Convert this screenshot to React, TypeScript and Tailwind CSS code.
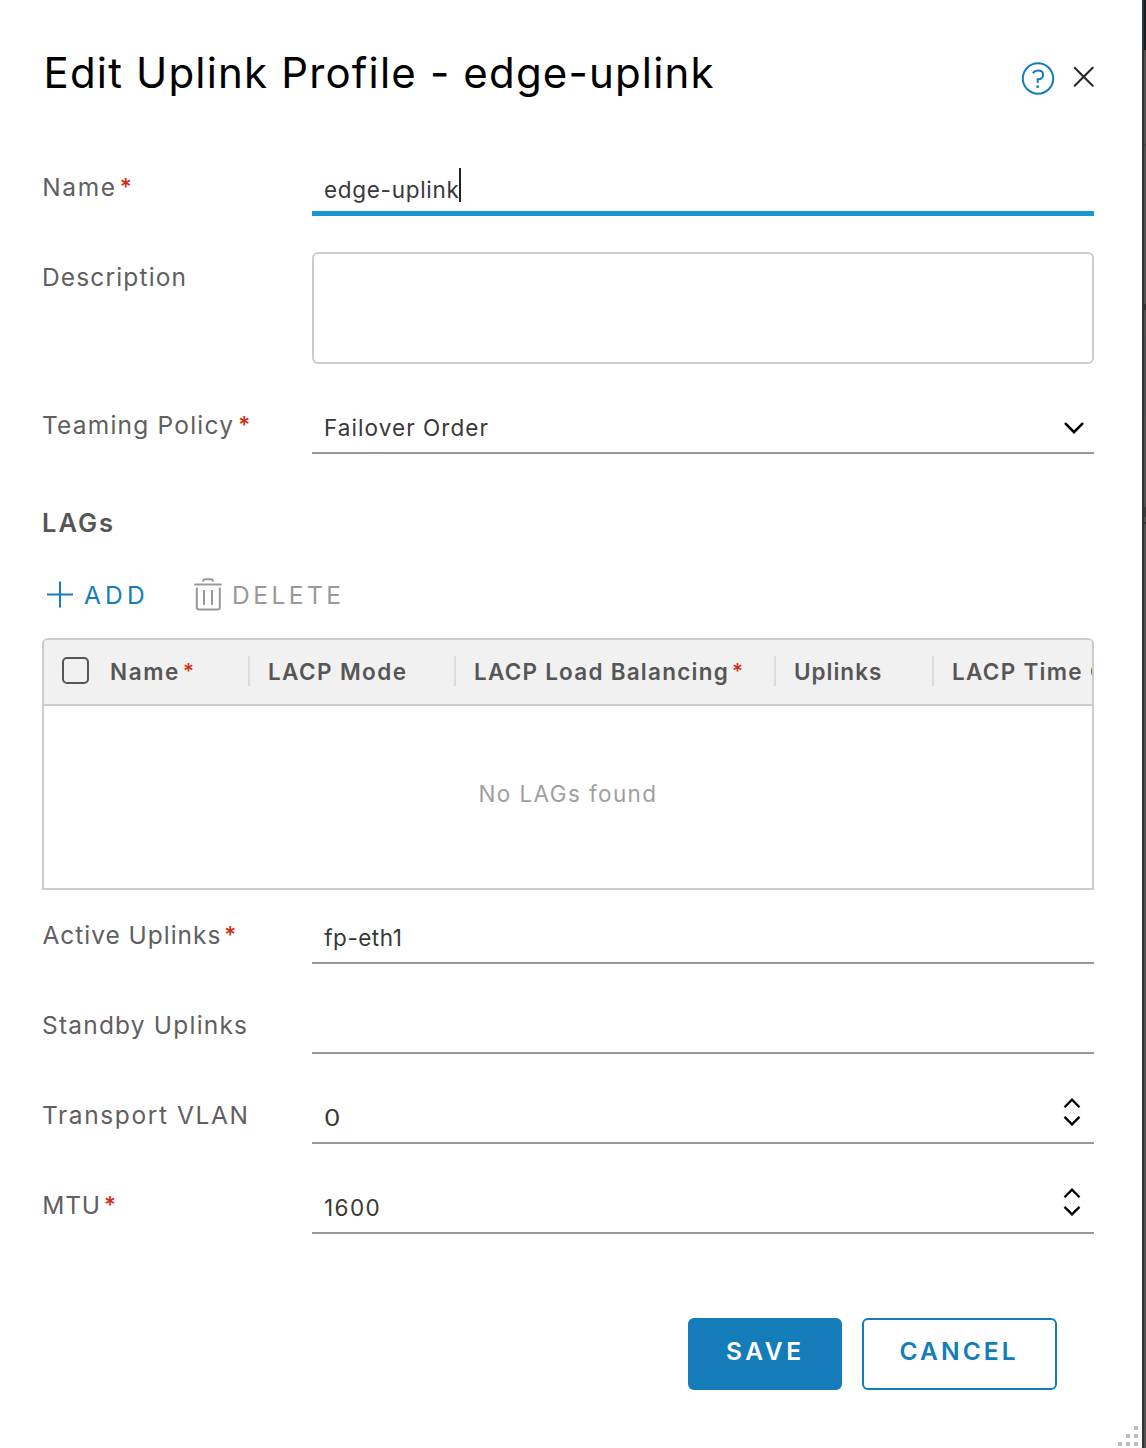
import type { ReactNode } from "react";

function Star({ className = "" }: { className?: string }) {
  return (
    <span className={`inline-block leading-9 font-medium tracking-normal text-[#cf2a10] ${className}`}>
      *
    </span>
  );
}

function Row({
  label,
  labelClass,
  star,
  tall,
  last,
  children,
}: {
  label: string;
  labelClass: string;
  star?: string;
  tall?: boolean;
  last?: boolean;
  children: ReactNode;
}) {
  return (
    <div className={`flex ${tall ? "h-[112px]" : "h-[54px]"} ${last ? "" : "mb-9"}`}>
      <div className="flex w-[270px] shrink-0 pt-[7px] text-[24.5px] leading-9 font-normal whitespace-nowrap text-[#606060]">
        <span className={labelClass}>{label}</span>
        {star && <Star className={`text-[23px] ${star}`} />}
      </div>
      {children}
    </div>
  );
}

function Field({ children, focus }: { children?: ReactNode; focus?: boolean }) {
  return (
    <div
      className={`flex flex-1 items-start justify-between pt-[10px] pr-[10px] pl-3 text-[22.5px] leading-9 font-normal text-[#383838] ${
        focus ? "border-b-5 border-[#1a94d2]" : "border-b-2 border-[#999]"
      }`}
    >
      {children}
    </div>
  );
}

function Stepper() {
  return (
    <svg className="mr-[2px] -mt-[3px] h-[30px] w-5" viewBox="0 0 20 30" fill="none" stroke="#000" strokeWidth="2.3">
      <path d="M2.5 10.2 10 2.7 17.5 10.2M2.5 19.9 10 27.4 17.5 19.9" />
    </svg>
  );
}

function Divider() {
  return <span className="h-[30px] w-[2px] shrink-0 bg-[#dcdcdc]" />;
}

export default function App() {
  return (
    <div className="flex h-[1448px] w-[1146px] overflow-hidden bg-white font-['Inter',sans-serif]">
      <main className="relative flex w-[1142px] shrink-0 flex-col pr-[48px] pl-[42px]">
        <header className="flex h-[162px] items-start pt-[45px]">
          <h1 className="ml-[1.5px] flex-1 text-[42px] leading-[56px] font-normal tracking-[1.17px] whitespace-nowrap text-black">
            Edit Uplink Profile - edge-uplink
          </h1>
          <svg className="mt-4 h-[34px] w-[34px]" viewBox="0 0 34 34" fill="none" stroke="#137cb9" strokeWidth="2">
            <circle cx="17" cy="17.5" r="15.2" />
            <path d="M11.8 12c1.4-1.7 3-2.6 5.2-2.6 3.1 0 5.1 1.7 5.1 4.3 0 3-2.4 4.5-5.4 4.6v3.6" />
            <circle cx="16.7" cy="25.7" r="1.4" fill="#137cb9" stroke="none" />
          </svg>
          <svg className="mt-[21px] ml-[18px] h-[21px] w-[21px]" viewBox="0 0 21 21" fill="none" stroke="#262626" strokeWidth="2" strokeLinecap="round">
            <path d="m1.7 1.7 18 18M19.7 1.7l-18 18" />
          </svg>
        </header>

        <Row label="Name" labelClass="ml-[0.3px] tracking-[1.6px]" star="ml-[3px]">
          <Field focus>
            <span className="flex">
              <span className="tracking-[0.7px]">edge-uplink</span>
              <span className="-mt-1 h-[34px] w-[2px] bg-[#222]" />
            </span>
          </Field>
        </Row>
        <Row label="Description" labelClass="tracking-[1.15px]" tall>
          <div className="flex-1 rounded-[6px] border-2 border-[#ccc]" />
        </Row>
        <Row label="Teaming Policy" labelClass="tracking-[1.2px]" star="ml-[4px]">
          <Field>
            <span className="tracking-[1.07px]">Failover Order</span>
            <svg className="mt-[10px] h-4 w-5" viewBox="0 0 20 16" fill="none" stroke="#000" strokeWidth="2.6" strokeLinecap="round">
              <path d="m1.8 3.8 8.2 8.4 8.2-8.4" />
            </svg>
          </Field>
        </Row>

        <h2 className="mt-[15px] text-[25.5px] leading-9 font-semibold tracking-[2px] text-[#565656]">LAGs</h2>
        <div className="mt-9 flex h-[61px] items-start text-[24.5px] leading-9 font-normal">
          <div className="flex w-[151px] text-[#137cb9]">
            <svg className="mt-1 ml-1 h-7 w-7" viewBox="0 0 28 28" fill="none" stroke="currentColor" strokeWidth="2">
              <path d="M1 13.5h26M14 .5v26" />
            </svg>
            <span className="ml-[10px] tracking-[4.2px]">ADD</span>
          </div>
          <div className="flex text-[#999]">
            <svg className="h-9 w-[30px]" viewBox="0 0 30 36" fill="none" stroke="currentColor" strokeWidth="2">
              <path d="M1.3 7.5h27.4M10.3 4.7V3.5c0-.8.5-1.3 1.3-1.3h6.8c.8 0 1.3.5 1.3 1.3v1.2M3.8 10.5v19.7c0 1.4.9 2.3 2.3 2.3h18.4c1.4 0 2.3-.9 2.3-2.3V10.5M11 13v15M19 13v15" />
            </svg>
            <span className="ml-[9px] tracking-[3.5px]">DELETE</span>
          </div>
        </div>

        <section className="h-[252px] overflow-hidden rounded-t-[6px] border-2 border-[#ccc]">
          <div className="flex h-[66px] items-center overflow-hidden border-b-2 border-[#ccc] bg-[#f1f1f1] pb-[2px] text-[22.5px] leading-9 font-semibold whitespace-nowrap text-[#565656]">
            <span className="-mt-px ml-[18px] h-[27px] w-[27px] shrink-0 rounded-[5px] border-2 border-[#565656]" />
            <div className="mt-[2px] ml-[21px] flex w-[138px] shrink-0">
              <span className="tracking-[1.6px]">Name</span>
              <Star className="ml-[3px] text-[21px]" />
            </div>
            <Divider />
            <div className="mt-[2px] w-[204px] shrink-0 pl-[18px] tracking-[1.4px]">LACP Mode</div>
            <Divider />
            <div className="mt-[2px] flex w-[318px] shrink-0 pl-[18px]">
              <span className="tracking-[1.24px]">LACP Load Balancing</span>
              <Star className="ml-[3px] text-[21px]" />
            </div>
            <Divider />
            <div className="mt-[2px] w-[156px] shrink-0 pl-[18px] tracking-[1px]">Uplinks</div>
            <Divider />
            <div className="mt-[2px] shrink-0 pl-[18px] tracking-[1.3px]">LACP Time Out</div>
          </div>
          <div className="pt-[70px] text-center text-[22.5px] leading-9 font-normal tracking-[1.4px] text-[#9f9f9f]">
            No LAGs found
          </div>
        </section>

        <div className="mt-5">
          <Row label="Active Uplinks" labelClass="ml-[0.5px] tracking-[0.97px]" star="ml-[3px]">
            <Field>
              <span className="ml-[0.3px] tracking-[0.5px]">fp-eth1</span>
            </Field>
          </Row>
          <Row label="Standby Uplinks" labelClass="tracking-[1.2px]">
            <Field />
          </Row>
          <Row label="Transport VLAN" labelClass="tracking-[1.6px]">
            <Field>
              <span className="inline-block origin-left scale-x-115">0</span>
              <Stepper />
            </Field>
          </Row>
          <Row label="MTU" labelClass="ml-[0.3px] tracking-[0.8px]" star="ml-[3px]" last>
            <Field>
              <span className="tracking-[1.4px]">1600</span>
              <Stepper />
            </Field>
          </Row>
        </div>

        <footer className="mt-[84px] flex justify-end gap-5 pr-[37px] text-[24.5px] leading-9 font-semibold">
          <button className="flex h-[72px] w-[154px] rounded-[6px] bg-[#137cb9] pt-[15px] pl-[38px] tracking-[3.6px] text-white">
            SAVE
          </button>
          <button className="flex h-[72px] w-[195px] rounded-[6px] border-2 border-[#137cb9] pt-[13px] pl-[35.5px] tracking-[3.1px] text-[#137cb9]">
            CANCEL
          </button>
        </footer>

        <svg className="absolute right-0 bottom-0 h-6 w-6" viewBox="0 0 24 24" fill="#bdbdbd">
          <path d="M16 2h4v4h-4zM8 10h4v4H8zM16 10h4v4h-4zM0 18h4v4H0zM8 18h4v4H8zM16 18h4v4h-4z" />
        </svg>
      </main>
      <aside className="flex w-1 shrink-0 flex-col border-l-2 border-[#333] bg-[#505050]">
        <div className="h-[50px] bg-[#111f28]" />
        <div className="mt-[94px] h-[2px] bg-[#444]" />
        <div className="mt-[158px] h-[6px] bg-[#333]" />
        <div className="mt-[32px] h-[68px] bg-[#4a5054]" />
        <div className="mt-[97px] h-[10px] bg-[#3a3a3a]" />
        <div className="mt-[5px] h-[2px] bg-[#333]" />
      </aside>
    </div>
  );
}
